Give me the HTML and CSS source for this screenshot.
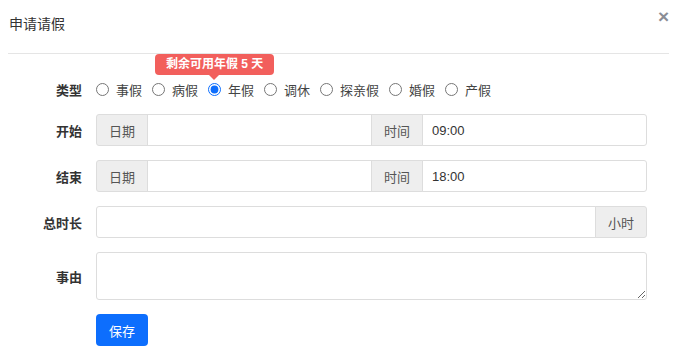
FILE: index.html
```html
<!DOCTYPE html>
<html lang="zh">
<head>
    <meta charset="UTF-8">
    <meta name="viewport" content="width=device-width, initial-scale=1.0">
    <title>申请请假</title>
    <link rel="stylesheet" href="styles.css">
</head>
<body>
    <div class="modal">
        <div class="modal-header">
            <h4 class="modal-title">申请请假</h4>
            <button class="close-button" aria-label="关闭">&times;</button>
        </div>

        <form class="leave-form">
            <div class="form-row">
                <label class="form-label">类型</label>
                <div class="radio-list">
                    <label class="radio-item"><input type="radio" name="type"> 事假</label>
                    <label class="radio-item"><input type="radio" name="type"> 病假</label>
                    <label class="radio-item with-tip">
                        <span class="tip">剩余可用年假 5 天</span>
                        <input type="radio" name="type" checked> 年假
                    </label>
                    <label class="radio-item"><input type="radio" name="type"> 调休</label>
                    <label class="radio-item"><input type="radio" name="type"> 探亲假</label>
                    <label class="radio-item"><input type="radio" name="type"> 婚假</label>
                    <label class="radio-item"><input type="radio" name="type"> 产假</label>
                </div>
            </div>

            <div class="form-row">
                <label class="form-label">开始</label>
                <div class="input-group">
                    <span class="addon">日期</span>
                    <input type="text" class="field">
                    <span class="addon">时间</span>
                    <input type="text" class="field" value="09:00">
                </div>
            </div>

            <div class="form-row">
                <label class="form-label">结束</label>
                <div class="input-group">
                    <span class="addon">日期</span>
                    <input type="text" class="field">
                    <span class="addon">时间</span>
                    <input type="text" class="field" value="18:00">
                </div>
            </div>

            <div class="form-row">
                <label class="form-label">总时长</label>
                <div class="input-group">
                    <input type="text" class="field">
                    <span class="addon">小时</span>
                </div>
            </div>

            <div class="form-row">
                <label class="form-label">事由</label>
                <textarea class="reason"></textarea>
            </div>

            <div class="form-row">
                <span></span>
                <div>
                    <button type="button" class="save-button">保存</button>
                </div>
            </div>
        </form>
    </div>
</body>
</html>
```

FILE: styles.css
```css
body {
    font-family: 'Liberation Sans', 'Noto Sans CJK SC', sans-serif;
    background-color: white;
    margin: 0;
    color: #333;
    font-size: 13px;
}
.modal {
    width: 678px;
}
.modal-header {
    display: flex;
    justify-content: space-between;
    align-items: center;
    height: 45px;
    margin: 0 9px 0 8px;
    border-bottom: 1px solid #e5e5e5;
    padding-bottom: 8px;
}
.modal-title {
    margin: 0 0 0 1px;
    font-size: 14px;
    font-weight: normal;
    color: #333;
    position: relative;
    top: 0;
}
.close-button {
    border: none;
    background: none;
    padding: 0;
    font-size: 19px;
    font-weight: bold;
    color: #8a8d95;
    line-height: 1;
    cursor: pointer;
    position: relative;
    top: -6px;
}
.leave-form {
    display: flex;
    flex-direction: column;
    gap: 14px;
    padding: 24px 31px 0 0;
}
.form-row {
    display: grid;
    grid-template-columns: 82px 1fr;
    column-gap: 14px;
    align-items: center;
}
.form-label {
    text-align: right;
    font-weight: bold;
    color: #333;
}
.radio-list {
    display: flex;
    align-items: center;
    height: 22px;
}
.radio-item {
    position: relative;
    display: inline-flex;
    align-items: center;
    gap: 7px;
    margin-right: 10px;
    color: #444;
}
.radio-item input {
    width: 13px;
    height: 13px;
    margin: 0;
    accent-color: #0d6efd;
}
.tip {
    position: absolute;
    left: -53px;
    bottom: 24px;
    white-space: nowrap;
    background-color: #f25f5c;
    color: white;
    font-weight: bold;
    font-size: 12px;
    line-height: 21px;
    padding: 0 11px;
    border-radius: 4px;
}
.tip::after {
    content: "";
    position: absolute;
    left: 54px;
    bottom: -5px;
    border-left: 5px solid transparent;
    border-right: 5px solid transparent;
    border-top: 5px solid #f25f5c;
}
.input-group {
    display: flex;
    height: 32px;
}
.addon {
    display: flex;
    align-items: center;
    padding: 0 12px;
    background-color: #eee;
    border: 1px solid #ddd;
    color: #555;
}
.field {
    flex: 1;
    min-width: 0;
    border: 1px solid #ddd;
    padding: 0 9px;
    font-family: 'Liberation Sans', 'Noto Sans CJK SC', sans-serif;
    font-size: 13px;
    color: #333;
    outline: none;
}
.input-group > * + * {
    margin-left: -1px;
}
.input-group > :first-child {
    border-radius: 3px 0 0 3px;
}
.input-group > :last-child {
    border-radius: 0 3px 3px 0;
}
.reason {
    height: 48px;
    box-sizing: border-box;
    border: 1px solid #ddd;
    border-radius: 3px;
    font-family: 'Liberation Sans', 'Noto Sans CJK SC', sans-serif;
    font-size: 13px;
    margin: 0;
}
.save-button {
    width: 52px;
    height: 32px;
    background-color: #0d6efd;
    color: white;
    border: none;
    border-radius: 4px;
    font-family: 'Liberation Sans', 'Noto Sans CJK SC', sans-serif;
    font-size: 13px;
    cursor: pointer;
}
```
